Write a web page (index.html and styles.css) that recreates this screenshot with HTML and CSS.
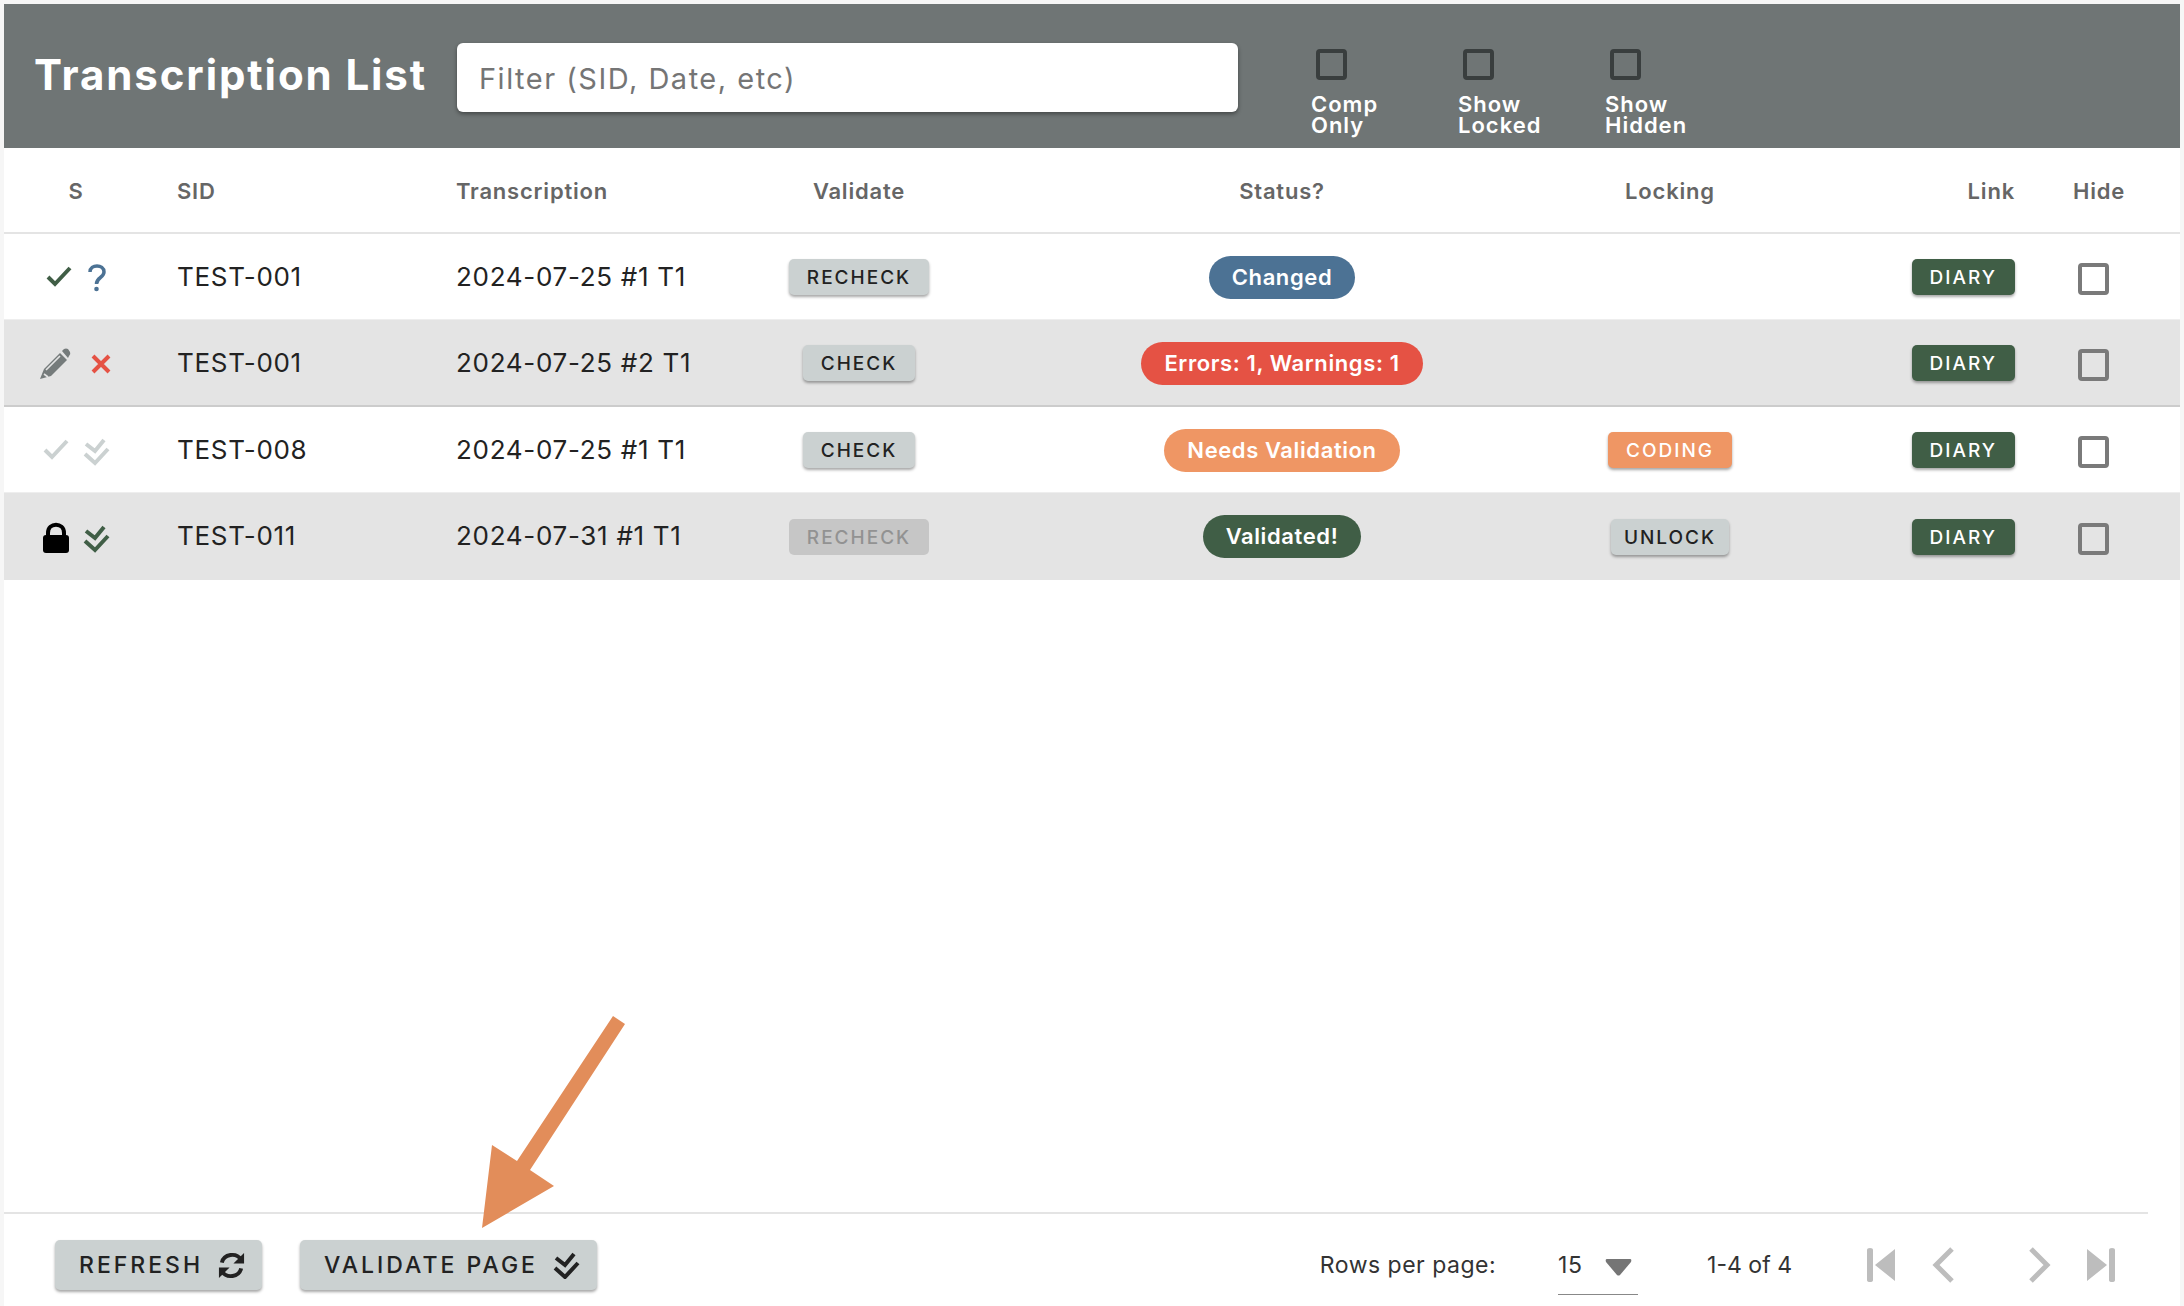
FILE: index.html
```html
<!doctype html>
<html>
<head>
<meta charset="utf-8"/>
<title>Transcription List</title>
<link rel="stylesheet" href="styles.css">
</head>
<body>

<svg class="defs">
	<symbol id="i-check" viewBox="0 0 40 40"><path d="M6 20 L13 27 L28 11" fill="none" stroke="currentColor" stroke-width="4"/></symbol>
	<symbol id="i-double" viewBox="0 0 40 40">
		<path d="M10 14 L19 21 L28 10" fill="none" stroke="currentColor" stroke-width="4"/>
		<path d="M9 24 L19 33 L32 19" fill="none" stroke="currentColor" stroke-width="4"/>
	</symbol>
	<symbol id="i-question" viewBox="0 0 40 40">
		<path d="M14 15 C14 7 28 7 28 15 C28 21 20.500 20 20.500 27" fill="none" stroke="currentColor" stroke-width="3.500"/>
		<circle cx="20.500" cy="32" r="2.300" fill="currentColor"/>
	</symbol>
	<symbol id="i-cross" viewBox="0 0 40 40"><path d="M17 13 L33 29 M33 13 L17 29" fill="none" stroke="currentColor" stroke-width="4"/></symbol>
	<symbol id="i-pencil" viewBox="0 0 40 40">
		<path d="M4 36 L8 26 L24 10 L31 17 L15 33 Z" fill="currentColor"/>
		<path d="M26 8 L28 6 Q30 5 32 6 L34 9 Q35 11 33 13 L32 15 Z" fill="currentColor"/>
		<path d="M10 27 L24 13 M8 31 L12 34" fill="none" stroke="#e4e4e4" stroke-width="1.600"/>
	</symbol>
	<symbol id="i-lock" viewBox="0 0 40 40">
		<rect x="7" y="18" width="26" height="18" rx="3" fill="currentColor"/>
		<path d="M12 19 L12 16 C12 5 28 5 28 16 L28 19" fill="none" stroke="currentColor" stroke-width="4"/>
	</symbol>
	<symbol id="i-sync" viewBox="0 0 28 28">
		<path d="M4 11 C6 2 19 0 24 8" fill="none" stroke="currentColor" stroke-width="4"/>
		<path d="M27 1 L27 12 L16 12 Z" fill="currentColor"/>
		<path d="M24 17 C22 26 9 28 4 20" fill="none" stroke="currentColor" stroke-width="4"/>
		<path d="M1 27 L1 16 L12 16 Z" fill="currentColor"/>
	</symbol>
</svg>

<div class="app">
	<header class="topbar">
		<h1 class="title">Transcription List</h1>
		<div class="filter-box">Filter (SID, Date, etc)</div>
		<div class="toggles">
			<div class="toggle"><span class="toggle-box"></span><span class="toggle-label">Comp</span><span class="toggle-label">Only</span></div>
			<div class="toggle"><span class="toggle-box"></span><span class="toggle-label">Show</span><span class="toggle-label">Locked</span></div>
			<div class="toggle"><span class="toggle-box"></span><span class="toggle-label">Show</span><span class="toggle-label">Hidden</span></div>
		</div>
	</header>

	<main class="list">
		<table class="grid">
			<colgroup>
				<col class="c-s"><col class="c-sid"><col class="c-tr"><col class="c-val"><col class="c-status"><col class="c-lock"><col class="c-link"><col class="c-hide">
			</colgroup>
			<thead>
				<tr>
					<th class="center">S</th>
					<th class="left">SID</th>
					<th class="left">Transcription</th>
					<th class="center">Validate</th>
					<th class="center">Status?</th>
					<th class="center">Locking</th>
					<th class="link">Link</th>
					<th class="hide">Hide</th>
				</tr>
			</thead>
			<tbody>
				<tr>
					<td><div class="icons"><svg class="ico green"><use href="#i-check" x="6"/></svg><svg class="ico blue"><use href="#i-question"/></svg></div></td>
					<td class="left">TEST-001</td>
					<td class="left">2024-07-25 #1 T1</td>
					<td class="center"><span class="btn">RECHECK</span></td>
					<td class="center"><span class="pill pill-blue">Changed</span></td>
					<td class="center"></td>
					<td class="link"><span class="btn btn-green">DIARY</span></td>
					<td class="hide"><span class="box"></span></td>
				</tr>
				<tr class="shade edge">
					<td><div class="icons"><svg class="ico slate"><use href="#i-pencil"/></svg><svg class="ico red"><use href="#i-cross"/></svg></div></td>
					<td class="left">TEST-001</td>
					<td class="left">2024-07-25 #2 T1</td>
					<td class="center"><span class="btn">CHECK</span></td>
					<td class="center"><span class="pill pill-red">Errors: 1, Warnings: 1</span></td>
					<td class="center"></td>
					<td class="link"><span class="btn btn-green">DIARY</span></td>
					<td class="hide"><span class="box"></span></td>
				</tr>
				<tr>
					<td><div class="icons"><svg class="ico pale"><use href="#i-check" x="3"/></svg><svg class="ico pale"><use href="#i-double"/></svg></div></td>
					<td class="left">TEST-008</td>
					<td class="left">2024-07-25 #1 T1</td>
					<td class="center"><span class="btn">CHECK</span></td>
					<td class="center"><span class="pill pill-orange">Needs Validation</span></td>
					<td class="center"><span class="btn btn-orange">CODING</span></td>
					<td class="link"><span class="btn btn-green">DIARY</span></td>
					<td class="hide"><span class="box"></span></td>
				</tr>
				<tr class="shade">
					<td><div class="icons"><svg class="ico black"><use href="#i-lock"/></svg><svg class="ico green"><use href="#i-double"/></svg></div></td>
					<td class="left">TEST-011</td>
					<td class="left">2024-07-31 #1 T1</td>
					<td class="center"><span class="btn btn-off">RECHECK</span></td>
					<td class="center"><span class="pill pill-green">Validated!</span></td>
					<td class="center"><span class="btn btn-tight">UNLOCK</span></td>
					<td class="link"><span class="btn btn-green">DIARY</span></td>
					<td class="hide"><span class="box"></span></td>
				</tr>
			</tbody>
		</table>
	</main>

	<footer class="bottom">
		<span class="btn btn-big">REFRESH <svg class="ico-btn"><use href="#i-sync"/></svg></span>
		<span class="btn btn-big">VALIDATE PAGE <svg class="ico-btn" viewBox="7 8 27 27"><use href="#i-double" width="40" height="40"/></svg></span>
		<div class="pager">
			<span class="pager-label">Rows per page:</span>
			<span class="pager-select">15 <svg class="pager-caret" viewBox="0 0 27 17"><path d="M2 0 H25 Q27 0 26 3 L15 16 Q13.500 17 12 16 L1 3 Q0 0 2 0 Z"/></svg></span>
			<span class="pager-count">1-4 of 4</span>
			<svg class="nav nav-first" viewBox="0 0 28 34"><path d="M0 2 Q0 0 3 0 Q6 0 6 2 V32 Q6 34 3 34 Q0 34 0 32 Z M28 1 V33 L8 17 Z"/></svg>
			<svg class="nav nav-prev" viewBox="0 0 23 38"><path d="M20 3 L4 19 L20 35" fill="none" stroke-width="5"/></svg>
			<svg class="nav nav-next" viewBox="0 0 23 38"><path d="M3 3 L19 19 L3 35" fill="none" stroke-width="5"/></svg>
			<svg class="nav nav-last" viewBox="0 0 28 34"><path d="M22 2 Q22 0 25 0 Q28 0 28 2 V32 Q28 34 25 34 Q22 34 22 32 Z M0 1 V33 L20 17 Z"/></svg>
		</div>
	</footer>
</div>

<!-- annotation arrow on top of the screenshot -->
<svg class="arrow" viewBox="0 0 2184 1306"><polygon points="613,1016 625,1024 530,1170 554,1186 482,1228 492,1145 517,1161"/></svg>

</body>
</html>
```

FILE: styles.css
```css
* { box-sizing: border-box; }
html, body { margin: 0; padding: 0; height: 100%; overflow: hidden; }
body { background: #f6f6f6; font-family: "Inter", "Liberation Sans", sans-serif; color: #222; position: relative; }
.defs { display: none; }

.app { margin: 4px 4px 0 4px; height: 1302px; background: #fff; display: flex; flex-direction: column; }

/* top bar */
.topbar { height: 144px; background: #6f7575; display: flex; padding-left: 30px; flex: none; }
.title { width: 423px; margin: 0; padding-top: 45px; font-size: 42px; line-height: 52px; font-weight: 700; color: #fff; letter-spacing: 1.9px; white-space: nowrap; }
.filter-box { width: 781px; height: 69px; margin-top: 39px; padding-left: 22px; background: #fff; border-radius: 6px; box-shadow: 0 2px 4px rgba(0,0,0,.4); font-size: 29px; line-height: 71px; letter-spacing: 1.5px; color: #757575; }
.toggles { display: flex; margin-left: 73px; }
.toggle { width: 147px; padding-top: 45px; display: flex; flex-direction: column; }
.toggle-box { width: 31px; height: 31px; margin-left: 5px; margin-bottom: 14px; border: 4px solid #393e3e; border-radius: 4px; }
.toggle-label { display: block; height: 21px; font-size: 22px; line-height: 21px; font-weight: 600; letter-spacing: 1px; color: #fff; }

/* table */
.list { flex: 1; }
.grid { width: 100%; table-layout: fixed; border-collapse: collapse; }
.c-s { width: 144px; }
.c-sid { width: 279px; }
.c-tr { width: 293px; }
.c-val { width: 278px; }
.c-status { width: 568px; }
.c-lock { width: 208px; }
.c-link { width: 269px; }
.c-hide { width: 137px; }
.grid th { height: 85px; padding: 2px 0 0 0; font-size: 22px; font-weight: 600; letter-spacing: .8px; color: #666; border-bottom: 2px solid #e4e4e4; }
.grid td { height: 86px; padding: 0; font-size: 26px; font-weight: 400; letter-spacing: .7px; color: #222; }
.grid tbody tr.shade td { height: 87px; }
.grid tbody tr { border-bottom: 1px solid #eee; }
.grid tbody tr.shade { background: #e4e4e4; border-bottom-color: #e4e4e4; }
.grid tbody tr.edge { border-bottom: 2px solid #ccc; }
.left { text-align: left; padding-left: 29px !important; }
.center { text-align: center; }
.link { text-align: right; padding-right: 28px !important; }
th.hide { text-align: left; padding-left: 30px !important; }
td.hide { padding-left: 35px !important; }

.icons { display: flex; padding: 2px 0 0 32px; }
.ico { width: 40px; height: 40px; flex: none; }
.green { color: #405e46; }
.blue { color: #4c7294; }
.slate { color: #757b7b; }
.red { color: #e55244; }
.pale { color: #cbd1d1; }
.black { color: #000; }

.btn { display: inline-block; height: 36px; margin-top: 2px; padding: 0 18px; background: #cbd1d1; border-radius: 5px; box-shadow: 0 2px 3px rgba(0,0,0,.35); font-size: 19px; line-height: 37px; font-weight: 500; letter-spacing: 2px; color: #222; vertical-align: middle; }
.btn-green { background: #405e46; color: #fff; }
.btn-orange { background: #ef9664; color: #fff; }
.btn-off { background: #c6c6c6; color: #929292; box-shadow: none; }
.btn-tight { padding: 0 13px; }

.pill { display: inline-block; height: 43px; margin-top: 2px; padding: 0 23px; border-radius: 22px; font-size: 22px; line-height: 43px; font-weight: 600; letter-spacing: .6px; color: #fff; vertical-align: middle; }
.pill-blue { background: #4c7294; }
.pill-red { background: #e55244; }
.pill-orange { background: #ef9664; }
.pill-green { background: #405e46; }

.box { display: block; width: 31px; height: 32px; margin-top: 6px; border: 4px solid #7a7a7a; border-radius: 4px; }

/* footer */
.bottom { height: 94px; flex: none; margin-right: 32px; padding: 26px 0 0 51px; border-top: 2px solid #e4e4e4; display: flex; align-items: flex-start; }
.btn-big { height: 50px; margin-top: 0; padding: 0 17px 0 24px; margin-right: 38px; display: flex; align-items: center; gap: 15px; font-size: 23px; line-height: 50px; letter-spacing: 3px; }
.ico-btn { width: 27px; height: 27px; color: #222; }
.pager { margin-left: auto; padding-right: 33px; display: flex; align-items: flex-start; font-size: 23px; line-height: 50px; letter-spacing: .5px; color: #333; }
.pager-label { margin-right: 62px; }
.pager-select { width: 80px; height: 55px; border-bottom: 1px solid #888; display: flex; gap: 23px; }
.pager-caret { width: 27px; height: 17px; margin-top: 19px; fill: #757575; }
.pager-count { margin-left: 69px; margin-right: 75px; letter-spacing: 0; }
.nav { flex: none; fill: #bdbdbd; stroke: #bdbdbd; margin-top: 8px; }
.nav-first, .nav-last { width: 28px; height: 34px; stroke: none; }
.nav-prev, .nav-next { width: 23px; height: 38px; margin-top: 6px; }
.nav-first { margin-right: 37px; }
.nav-prev { margin-right: 73px; }
.nav-next { margin-right: 36px; }

.arrow { position: absolute; left: 0; top: 0; width: 2184px; height: 1306px; fill: #e28d5a; pointer-events: none; }
```
